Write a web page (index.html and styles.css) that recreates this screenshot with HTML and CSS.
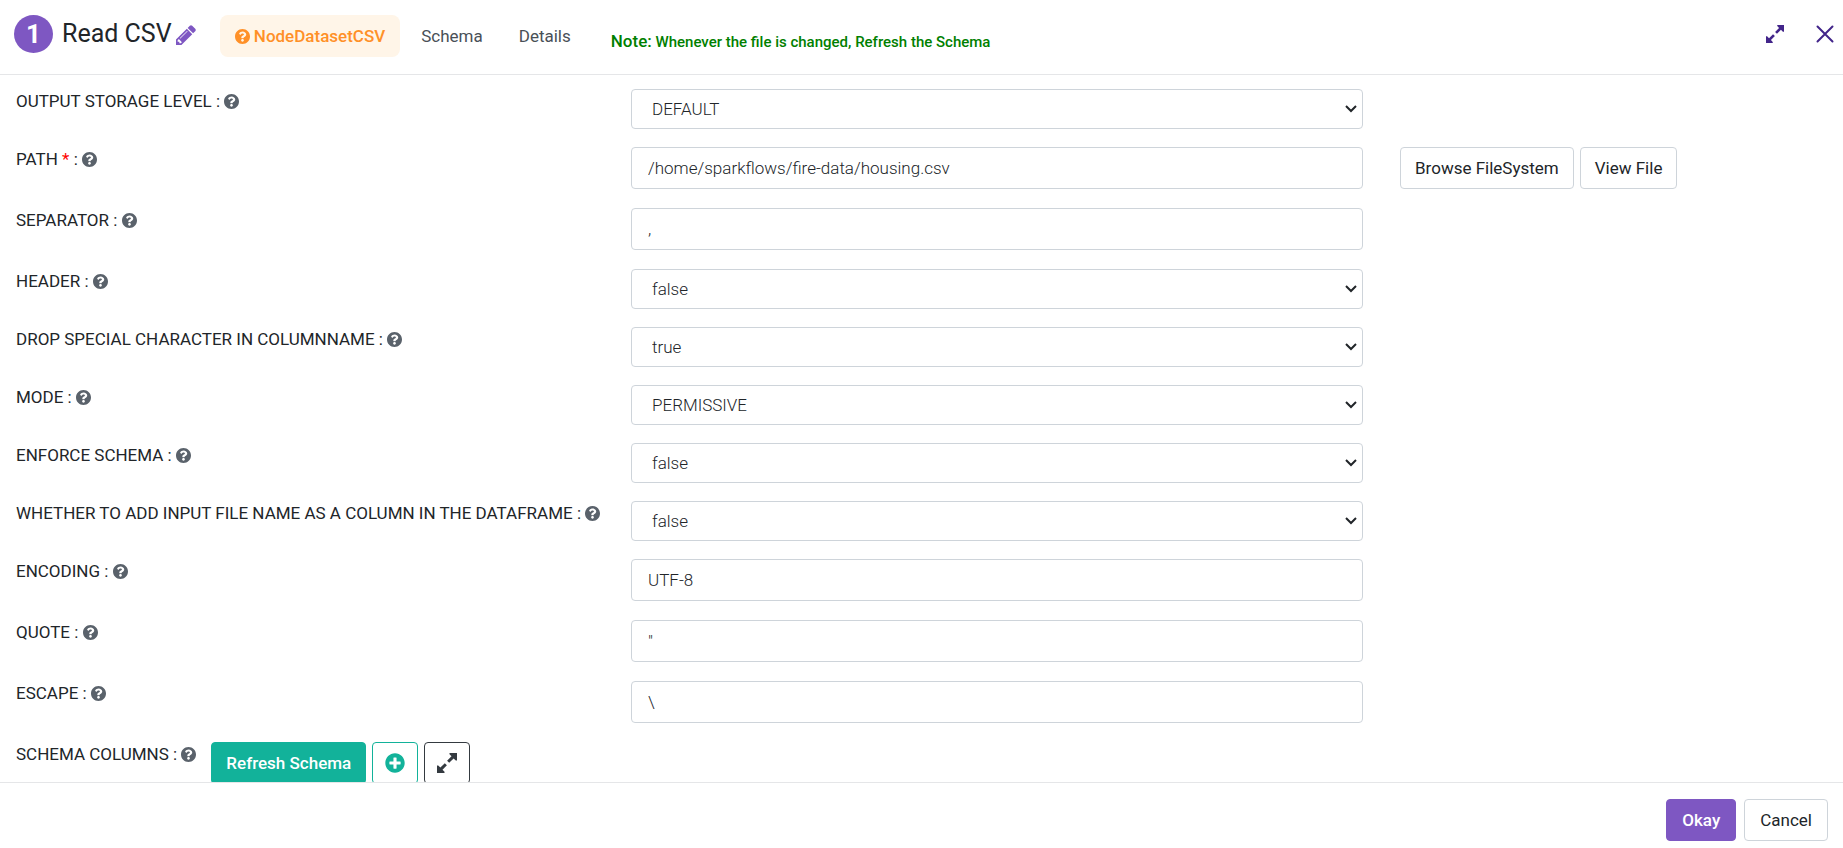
FILE: index.html
```html
<!DOCTYPE html>
<html lang="en">
<head>
<meta charset="utf-8">
<title>Read CSV</title>
<link rel="stylesheet" href="styles.css">
</head>
<body>
<svg class="sprite" aria-hidden="true">
  <symbol id="help" viewBox="8 8 496 496"><path fill="currentColor" d="M504 256c0 136.997-111.043 248-248 248S8 392.997 8 256C8 119.083 119.043 8 256 8s248 111.083 248 248zM262.655 90c-54.497 0-89.255 22.957-116.549 63.758-3.536 5.286-2.353 12.415 2.715 16.258l34.699 26.31c5.205 3.947 12.621 3.008 16.665-2.122 17.864-22.658 30.113-35.797 57.303-35.797 20.429 0 45.698 13.148 45.698 32.958 0 14.976-12.363 22.667-32.534 33.976C247.128 238.528 216 254.941 216 296v4c0 6.627 5.373 12 12 12h56c6.627 0 12-5.373 12-12v-1.333c0-28.462 83.186-29.647 83.186-106.667 0-58.002-60.165-102-116.531-102zM256 338c-25.365 0-46 20.635-46 46 0 25.364 20.635 46 46 46s46-20.636 46-46c0-25.365-20.635-46-46-46z"/></symbol>
  <symbol id="plus" viewBox="0 0 512 512"><path fill="currentColor" d="M256 8C119 8 8 119 8 256s111 248 248 248 248-111 248-248S393 8 256 8zm144 276c0 6.600-5.400 12-12 12h-92v92c0 6.600-5.400 12-12 12h-56c-6.600 0-12-5.400-12-12v-92h-92c-6.600 0-12-5.400-12-12v-56c0-6.600 5.400-12 12-12h92v-92c0-6.600 5.400-12 12-12h56c6.600 0 12 5.400 12 12v92h92c6.600 0 12 5.400 12 12v56z"/></symbol>
  <symbol id="pencil" viewBox="0 0 1536 1536"><path fill="currentColor" d="M363 1408l91-91-235-235-91 91v107h128v128h107zM886 480q0-22-22-22-10 0-17 7l-542 542q-7 7-7 17 0 22 22 22 10 0 17-7l542-542q7-7 7-17zM832 288l416 416-832 832H0v-416zM1515 384q0 53-37 90l-166 166-416-416 166-165q36-38 90-38 53 0 91 38l235 234q37 39 37 91z"/></symbol>
  <symbol id="expand" viewBox="0 0 20 20"><path fill="currentColor" d="M12.500 0H20v7.500h-1.200l-2.200-2.100-4.400 4.400-2.100-2.100 4.400-4.400-2-2.100zM7.500 20H0v-7.500h1.200l2.200 2.100 4.400-4.400 2.100 2.100-4.400 4.400 2 2.100z"/></symbol>
  <symbol id="close" viewBox="0 0 18 18"><path fill="none" stroke="currentColor" stroke-width="2" stroke-linecap="round" d="M1.500 1.500l15 15M16.500 1.500l-15 15"/></symbol>
</svg>

<div class="dialog">
  <header class="header">
    <span class="badge">1</span>
    <h1 class="title">Read CSV</h1>
    <button class="icon-button edit" type="button" aria-label="Edit name"><svg class="icon-pencil"><use href="#pencil"/></svg></button>
    <nav class="tabs">
      <a class="tab tab-active" href="#node"><svg class="help"><use href="#help"/></svg> NodeDatasetCSV</a>
      <a class="tab" href="#schema">Schema</a>
      <a class="tab" href="#details">Details</a>
    </nav>
    <p class="note"><span class="note-lead">Note:</span> Whenever the file is changed, Refresh the Schema</p>
    <div class="window-actions">
      <button class="icon-button" type="button" aria-label="Expand"><svg class="icon-window"><use href="#expand"/></svg></button>
      <button class="icon-button" type="button" aria-label="Close"><svg class="icon-window"><use href="#close"/></svg></button>
    </div>
  </header>

  <form class="form" id="node-form">
    <div class="row row-select">
      <label class="label" for="storage">OUTPUT STORAGE LEVEL : <svg class="help"><use href="#help"/></svg></label>
      <select class="control" id="storage"><option>DEFAULT</option></select>
    </div>
    <div class="row">
      <label class="label" for="path">PATH <span class="required">*</span> : <svg class="help"><use href="#help"/></svg></label>
      <input class="control" id="path" type="text" value="/home/sparkflows/fire-data/housing.csv">
      <div class="row-actions">
        <button class="button" type="button">Browse FileSystem</button>
        <button class="button" type="button">View File</button>
      </div>
    </div>
    <div class="row">
      <label class="label" for="separator">SEPARATOR : <svg class="help"><use href="#help"/></svg></label>
      <input class="control" id="separator" type="text" value=",">
    </div>
    <div class="row row-select">
      <label class="label" for="has-header">HEADER : <svg class="help"><use href="#help"/></svg></label>
      <select class="control" id="has-header"><option>false</option><option>true</option></select>
    </div>
    <div class="row row-select">
      <label class="label" for="drop">DROP SPECIAL CHARACTER IN COLUMNNAME : <svg class="help"><use href="#help"/></svg></label>
      <select class="control" id="drop"><option>true</option><option>false</option></select>
    </div>
    <div class="row row-select">
      <label class="label" for="mode">MODE : <svg class="help"><use href="#help"/></svg></label>
      <select class="control" id="mode"><option>PERMISSIVE</option></select>
    </div>
    <div class="row row-select">
      <label class="label" for="enforce">ENFORCE SCHEMA : <svg class="help"><use href="#help"/></svg></label>
      <select class="control" id="enforce"><option>false</option><option>true</option></select>
    </div>
    <div class="row row-select">
      <label class="label" for="filename">WHETHER TO ADD INPUT FILE NAME AS A COLUMN IN THE DATAFRAME : <svg class="help"><use href="#help"/></svg></label>
      <select class="control" id="filename"><option>false</option><option>true</option></select>
    </div>
    <div class="row">
      <label class="label" for="encoding">ENCODING : <svg class="help"><use href="#help"/></svg></label>
      <input class="control" id="encoding" type="text" value="UTF-8">
    </div>
    <div class="row">
      <label class="label" for="quote">QUOTE : <svg class="help"><use href="#help"/></svg></label>
      <input class="control" id="quote" type="text" value="&quot;">
    </div>
    <div class="row">
      <label class="label" for="escape">ESCAPE : <svg class="help"><use href="#help"/></svg></label>
      <input class="control" id="escape" type="text" value="\">
    </div>
    <div class="schema-row">
      <span class="label">SCHEMA COLUMNS : <svg class="help"><use href="#help"/></svg></span>
      <div class="schema-actions">
        <button class="button button-teal" type="button">Refresh Schema</button>
        <button class="button button-square button-add" type="button" aria-label="Add column"><svg class="icon-action"><use href="#plus"/></svg></button>
        <button class="button button-square button-dark" type="button" aria-label="Expand schema"><svg class="icon-action"><use href="#expand"/></svg></button>
      </div>
    </div>
  </form>

  <footer class="footer">
    <button class="button button-primary" type="submit" form="node-form">Okay</button>
    <button class="button button-cancel" type="button">Cancel</button>
  </footer>
</div>
</body>
</html>
```
FILE: styles.css
```css
* { box-sizing: border-box; }

body {
  margin: 0;
  font-family: Roboto, "Liberation Sans", sans-serif;
  font-size: 17px;
  line-height: 24px;
  color: #212529;
  background: #fff;
}

.sprite { display: none; }

.dialog {
  display: flex;
  flex-direction: column;
  height: 100vh;
}

.header {
  display: flex;
  align-items: flex-start;
  flex: none;
  padding: 15px 9px 17px 14px;
  border-bottom: 1px solid #e5e6e8;
}

.badge {
  flex: none;
  width: 39px;
  height: 38px;
  border-radius: 50%;
  background: #7e57c2;
  color: #fff;
  font-size: 26px;
  font-weight: 700;
  line-height: 39px;
  text-align: center;
}

.title {
  margin: 0 4px 0 9px;
  font-size: 25px;
  font-weight: 400;
  line-height: 38px;
}

.icon-button {
  display: flex;
  padding: 0;
  border: 0;
  background: none;
  color: #42258a;
}

.edit {
  margin-top: 10px;
  color: #7e57c2;
}

.icon-pencil { width: 20px; height: 20px; }
.icon-window { width: 18px; height: 18px; }
.icon-action { width: 20px; height: 20px; }

.tabs {
  display: flex;
  gap: 6px;
  margin-left: 24px;
}

.tab {
  padding: 9px 15px;
  border-radius: 8px;
  color: #495057;
  text-decoration: none;
}

.tab-active {
  background: #fff5e8;
  color: #ff9027;
  font-weight: 500;
}

.help {
  width: 15px;
  height: 15px;
  vertical-align: -2px;
}

.label .help { color: #5a626b; }

.note {
  margin: 14px 0 0 25px;
  color: green;
  font-size: 15px;
  font-weight: 500;
}

.note-lead { font-size: 17px; }

.window-actions {
  display: flex;
  gap: 32px;
  margin: 10px 0 0 auto;
}

.form {
  flex: 1;
  min-height: 0;
  overflow: hidden;
  padding: 14px 16px 0;
}

.row {
  display: grid;
  grid-template-columns: 615fr 732fr 464fr;
  align-items: start;
  margin-bottom: 19px;
}

.row-select { margin-bottom: 18px; }

.required { color: #f00; }

.control {
  width: 100%;
  height: 42px;
  padding: 0 16px;
  border: 1px solid #ced4da;
  border-radius: 4px;
  background: #fff;
  color: #212529;
  font-family: inherit;
  font-size: 17px;
  font-weight: 300;
}

select.control {
  height: 40px;
  padding: 0 24px 0 20px;
  appearance: none;
  background: #fff url("data:image/svg+xml,%3Csvg xmlns='http://www.w3.org/2000/svg' width='12' height='8'%3E%3Cpath fill='none' stroke='%23212529' stroke-width='2' d='M1 1l5 5 5-5'/%3E%3C/svg%3E") no-repeat right 5px center;
}

.row-actions {
  display: flex;
  gap: 6px;
  padding-left: 37px;
}

.button {
  height: 42px;
  padding: 0 14px;
  border: 1px solid #ced4da;
  border-radius: 4px;
  background: #fff;
  color: #212529;
  font-family: inherit;
  font-size: 17px;
  line-height: 24px;
}

.schema-row {
  display: flex;
  align-items: flex-start;
  gap: 15px;
}

.schema-actions {
  display: flex;
  gap: 6px;
}

.button-teal {
  border-color: #12b29a;
  background: #12b29a;
  color: #fff;
  font-weight: 500;
}

.button-square {
  display: flex;
  align-items: center;
  justify-content: center;
  width: 46px;
  padding: 0;
}

.button-add {
  border-color: #12b29a;
  color: #12b29a;
}

.button-dark {
  border-color: #343a40;
  color: #343a40;
}

.footer {
  display: flex;
  flex: none;
  justify-content: flex-end;
  gap: 8px;
  padding: 16px 15px 7px;
  border-top: 1px solid #e5e6e8;
}

.footer .button { padding: 0 15px; }

.button-primary {
  border-color: #7e57c2;
  background: #7e57c2;
  color: #fff;
  font-weight: 500;
}
```
